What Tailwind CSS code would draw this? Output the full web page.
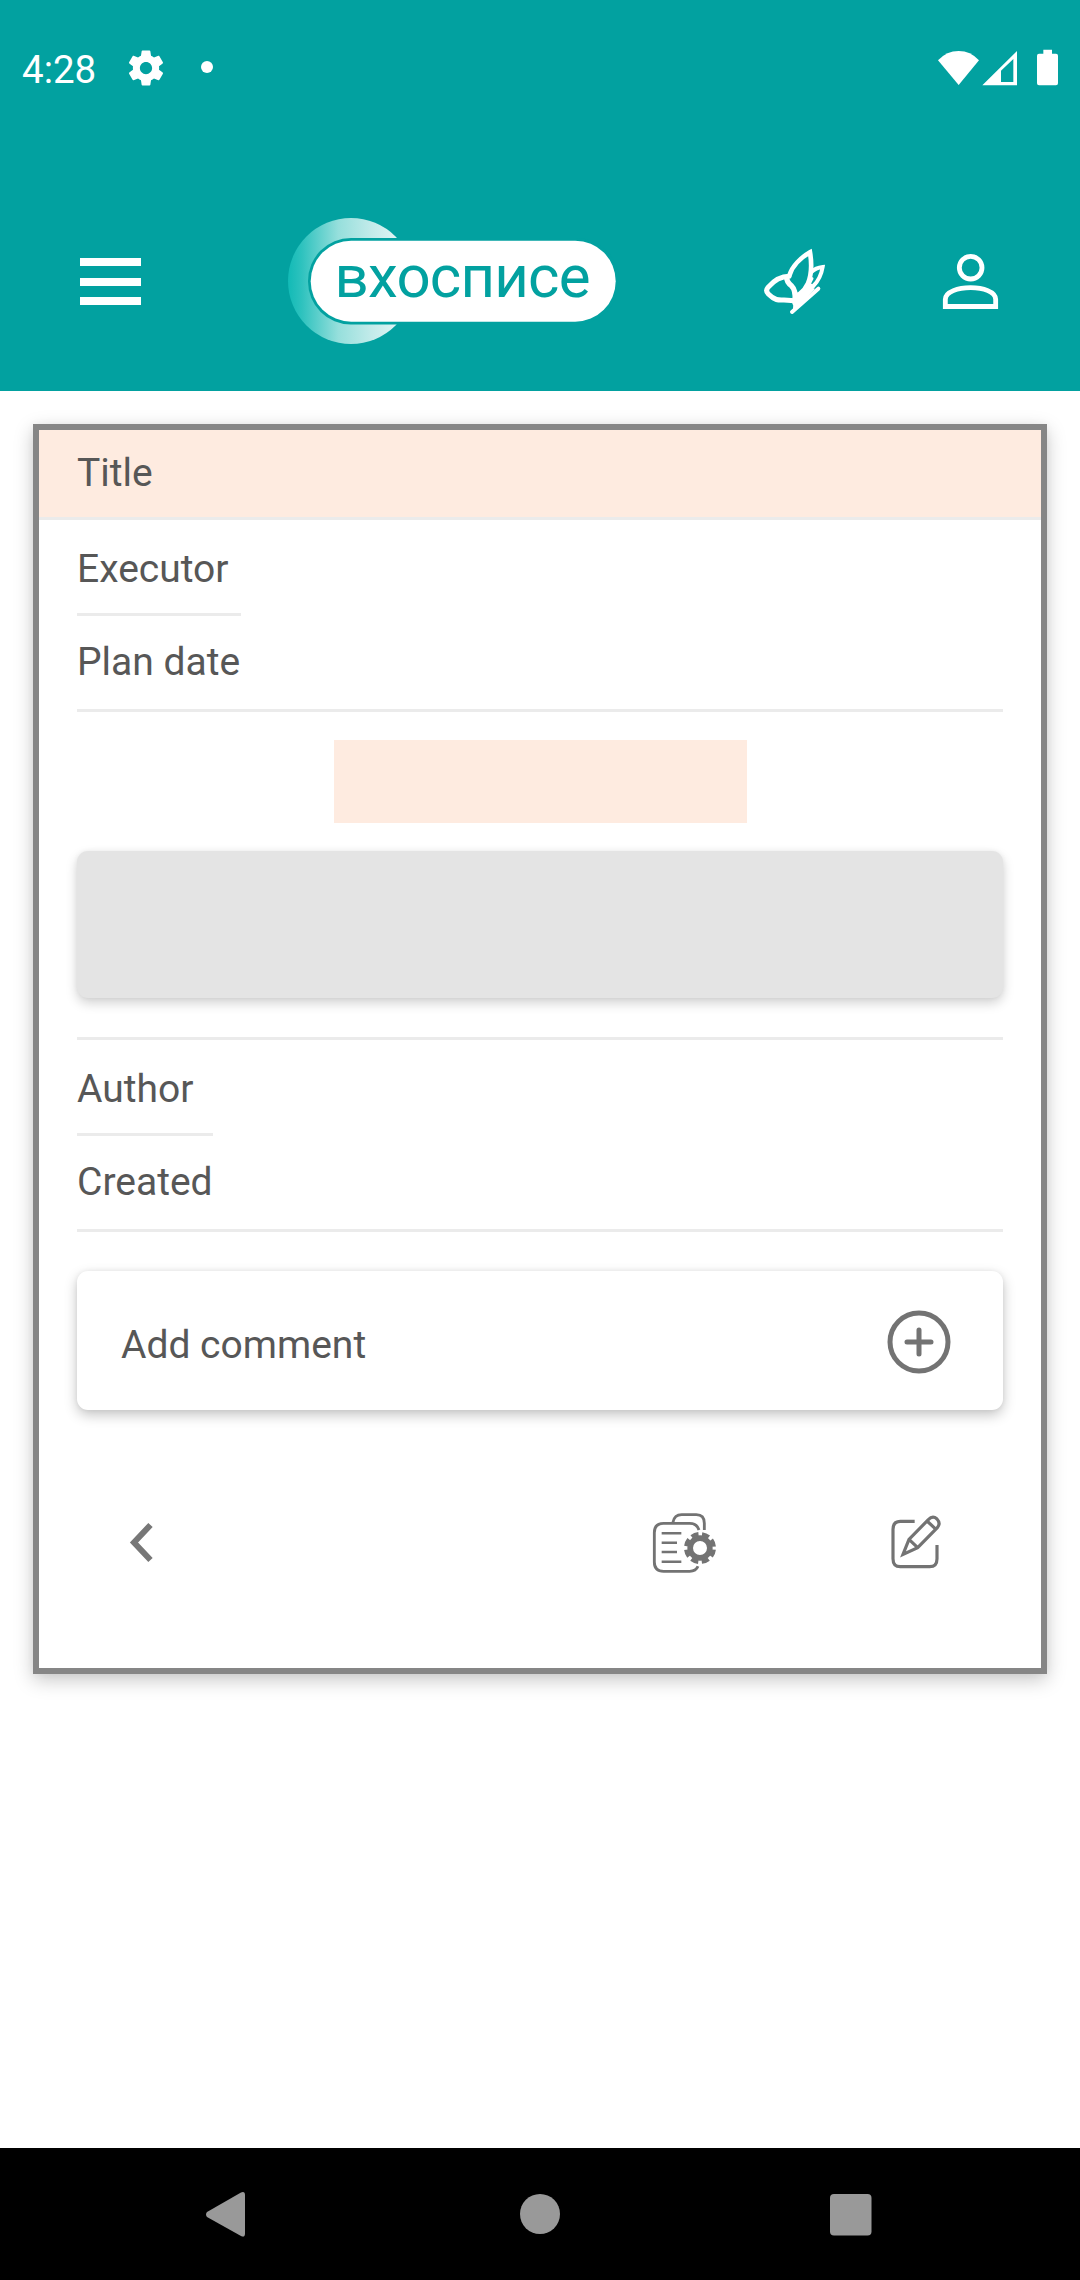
<!DOCTYPE html>
<html lang="en">
<head>
<meta charset="utf-8">
<title>Task</title>
<script src="https://cdn.jsdelivr.net/npm/@tailwindcss/browser@4"></script>
</head>
<body class="w-[1080px] h-[2280px] flex flex-col bg-white font-[Roboto,sans-serif] text-[39px] leading-[46px] text-[#575757] overflow-hidden">
<header class="h-[391px] shrink-0 bg-[#02a1a0] text-white flex flex-col">
  <!-- status bar -->
  <div class="h-[136px] flex items-center pl-[22px] pr-[22px]">
    <span class="w-[96px] pt-[4px] text-[38.5px]">4:28</span>
    <svg class="w-[42px] h-[42px] ml-[7px]" viewBox="0 0 24 24" fill="#fff"><path d="M19.43 12.98c.04-.32.07-.64.07-.98s-.03-.66-.07-.98l2.11-1.65c.19-.15.24-.42.12-.64l-2-3.46c-.12-.22-.39-.3-.61-.22l-2.49 1c-.52-.4-1.08-.73-1.69-.98l-.38-2.65C14.46 2.18 14.25 2 14 2h-4c-.25 0-.46.18-.49.42l-.38 2.65c-.61.25-1.17.59-1.69.98l-2.49-1c-.23-.09-.49 0-.61.22l-2 3.46c-.13.22-.07.49.12.64l2.11 1.65c-.04.32-.07.65-.07.98s.03.66.07.98l-2.11 1.65c-.19.15-.24.42-.12.64l2 3.46c.12.22.39.3.61.22l2.49-1c.52.4 1.08.73 1.69.98l.38 2.65c.03.24.24.42.49.42h4c.25 0 .46-.18.49-.42l.38-2.65c.61-.25 1.17-.59 1.69-.98l2.49 1c.23.09.49 0 .61-.22l2-3.46c.12-.22.07-.49-.12-.64l-2.11-1.65zM12 15.5c-1.93 0-3.5-1.57-3.5-3.5s1.57-3.5 3.5-3.5 3.5 1.57 3.5 3.5-1.57 3.5-3.5 3.5z"/></svg>
    <span class="w-3 h-3 rounded-full bg-white ml-[34px] mt-[-2px]"></span>
    <svg class="w-[122px] h-[40px] ml-auto" viewBox="108 52 366 120" fill="#fff">
      <path d="M114 89Q140 61 176 61T237 89L176 163Z"/>
      <path fill-rule="evenodd" d="M247 164L351 61V164ZM303 120V154H340V85Z"/>
      <path d="M430 57H456V69H468Q474 69 474 75V158Q474 164 468 164H417Q411 164 411 158V75Q411 69 417 69H430Z"/>
    </svg>
  </div>
  <!-- app bar -->
  <div class="h-[255px] flex pt-[64px]">
    <div class="w-[61px] h-[47px] ml-[80px] mt-[58px] flex flex-col justify-between"><i class="h-2 bg-white"></i><i class="h-2 bg-white"></i><i class="h-2 bg-white"></i></div>
    <svg class="w-[360px] h-[160px] ml-[129px]" viewBox="270 200 360 160">
      <defs><linearGradient id="moon" gradientUnits="userSpaceOnUse" x1="288" y1="0" x2="400" y2="0"><stop offset="0" stop-color="#12bab6"/><stop offset=".12" stop-color="#2dc2be"/><stop offset=".45" stop-color="#96dfdc"/><stop offset=".75" stop-color="#c3ebea"/><stop offset="1" stop-color="#e2f5f5"/></linearGradient></defs>
      <circle cx="351" cy="281" r="63" fill="url(#moon)"/>
      <rect x="308" y="238" width="311" height="86.500" rx="43" fill="#02a1a0"/>
      <rect x="310.700" y="240.700" width="305" height="81" rx="40.500" fill="#fff"/>
      <text x="334.500" y="297" font-size="60" textLength="256" fill="#02a1a0">вхосписе</text>
    </svg>
    <svg class="w-[280px] h-[100px] ml-[110px] mt-[30px]" viewBox="0 0 840 300" fill="none" stroke="#fff" stroke-linejoin="round" stroke-linecap="round">
      <path stroke-width="14" stroke-linejoin="miter" d="M148 137C156 108 184 82 210 67C216 103 213 138 204 160C198 174 189 184 178 193"/>
      <path stroke-width="15" d="M147 139C122 139 99 155 84 172C78 179 78 185 85 192C104 211 115 211 132 210L164 212"/>
      <path stroke-width="16" d="M140 142C140 155 147 162 154 167C163 176 167 190 165 211"/>
      <path stroke-width="12" stroke-linejoin="miter" d="M213 127C224 116 237 112 248 111C244 135 235 153 220 168L185 203"/>
      <path stroke-width="9" d="M216 146L206 165"/>
      <path stroke-width="12" d="M235 176L156 246M205 164L163 220"/>
      <path fill="#fff" stroke-width="4" d="M164 188L180 190L203 163L216 163L202 182L222 177L161 237Z"/>
      <g stroke-width="14.500"><circle cx="692" cy="113" r="34"/><path stroke-linejoin="miter" stroke-linecap="butt" d="M616 229.500V208C616 185 655 173 692 173S767 185 767 208V229.500Z"/></g>
    </svg>
  </div>
</header>

<main class="grow pt-[33px] px-[33px]">
  <section class="h-[1250px] border-6 border-[#868686] flex flex-col bg-white shadow-[0_6px_18px_rgba(0,0,0,0.22),0_0_8px_rgba(0,0,0,0.04)]">
    <div class="h-[90px] bg-[#feebe0] border-b-3 border-[#ebebeb] pl-[38px] pt-[20px]">Title</div>
    <div class="px-[38px] flex flex-col">
      <div class="w-[164px] h-[96px] border-b-3 border-[#ebebeb] pt-[26px]">Executor</div>
      <div class="h-[96px] border-b-3 border-[#ebebeb] pt-[23px] whitespace-nowrap">Plan date</div>
      <div class="self-center w-[413px] h-[83px] mt-[28px] bg-[#feebe0]"></div>
      <div class="h-[147px] mt-[28px] rounded-[11px] bg-[#e4e4e4] shadow-[0_5px_12px_rgba(0,0,0,0.18),0_0_5px_rgba(0,0,0,0.05)]"></div>
      <div class="h-[3px] mt-[39px] bg-[#ebebeb]"></div>
      <div class="w-[136px] h-[96px] border-b-3 border-[#ebebeb] pt-[26px]">Author</div>
      <div class="h-[96px] border-b-3 border-[#ebebeb] pt-[23px]">Created</div>
      <div class="h-[139px] mt-[39px] rounded-[11px] bg-white shadow-[0_5px_13px_rgba(0,0,0,0.23),0_0_5px_rgba(0,0,0,0.06)] flex items-center justify-between pl-[44px] pr-[52px]">
        <span class="pt-[9px]">Add comment</span>
        <svg class="w-[64px] h-[64px] mt-[3px]" viewBox="0 0 64 64" fill="none" stroke="#737373" stroke-width="5" stroke-linecap="round"><circle cx="32" cy="32" r="29"/><path d="M32 20V44M20 32H44"/></svg>
      </div>
      <div class="flex h-[120px] mt-[70px]">
        <svg class="w-[30px] h-[50px] ml-[49px] mt-[38px]" viewBox="126 1518 30 50" fill="none" stroke="#777" stroke-width="6"><path d="M150.500 1525L134 1542.500L150.500 1560"/></svg>
        <svg class="w-[360px] h-[120px] ml-[464px]" viewBox="0 0 1080 360" fill="none" stroke="#737373">
          <g stroke-width="8.500">
            <path d="M159 127Q163 104 185 104H229Q253 104 253 130V150"/>
            <path d="M237 150Q231 130 209 130H131Q103 130 103 158V246Q103 274 131 274H209Q228 274 234 259"/>
          </g>
          <path stroke-width="7.500" d="M125 160H184M125 188H171M125 216H171M125 245H184"/>
          <circle cx="240" cy="204" r="29.500" stroke-width="17"/>
          <circle cx="240" cy="204" r="42" stroke-width="12" stroke-dasharray="22 10.987" stroke-dashoffset="-5"/>
          <path stroke-width="9.500" d="M884 124H841Q819 124 819 148V236Q819 260 841 260H929Q951 260 951 236V195"/>
          <path stroke-width="9.500" d="M849 223L867 178L925 119Q938 105 951 117Q963 130 952 143L893 203ZM867 178L893 203M921 123L948 148"/>
        </svg>
      </div>
    </div>
  </section>
</main>

<nav class="h-[132px] shrink-0 bg-black">
  <svg class="w-[1080px] h-[132px]" viewBox="0 2148 1080 132" fill="#999"><path d="M207 2212L241 2192.500Q245 2191 245 2195V2233.500Q245 2238 241 2236L207 2217Q205 2214.500 207 2212Z"/><circle cx="540" cy="2214" r="20"/><rect x="830" y="2194" width="41.500" height="41.500" rx="4"/></svg>
</nav>
</body>
</html>
